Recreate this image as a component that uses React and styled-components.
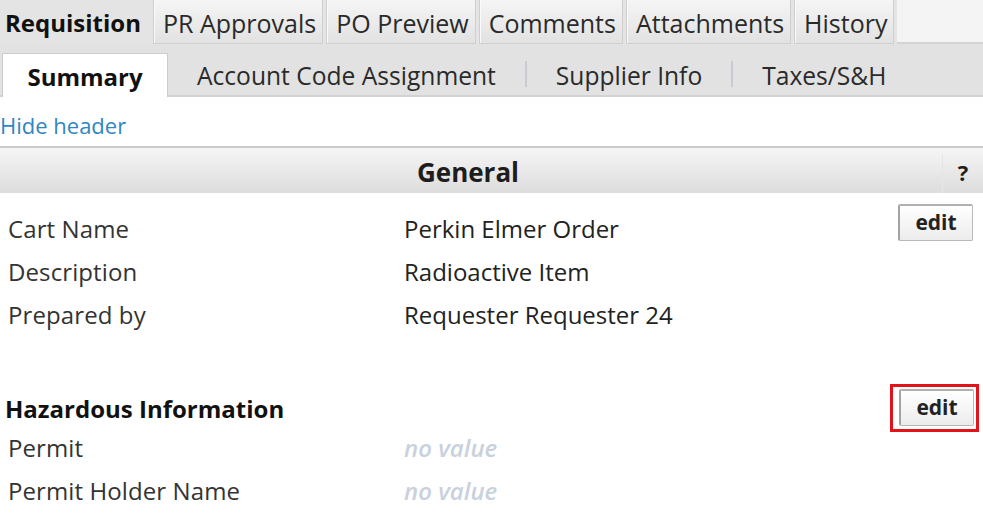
import React from "react";
import styled, { createGlobalStyle } from "styled-components";

const GlobalStyle = createGlobalStyle`
  html, body {
    margin: 0;
    padding: 0;
    background: #ffffff;
  }
  body {
    font-family: "Open Sans", "Noto Sans", "DejaVu Sans", sans-serif;
    color: #222;
  }
`;

const topTabs = ["PR Approvals", "PO Preview", "Comments", "Attachments", "History"];
const subTabs = ["Account Code Assignment", "Supplier Info", "Taxes/S&H"];

const generalRows = [
  { label: "Cart Name", value: "Perkin Elmer Order" },
  { label: "Description", value: "Radioactive Item" },
  { label: "Prepared by", value: "Requester Requester 24" },
];

const hazardRows = [
  { label: "Permit", value: "no value", empty: true },
  { label: "Permit Holder Name", value: "no value", empty: true },
];

const App = () => {
  return (
    <>
      <GlobalStyle />
      <Page>
        <TopTabBar>
          <TabGroup>
            <ActiveTopTab>Requisition</ActiveTopTab>
            {topTabs.map((t) => (
              <TopTab key={t}>{t}</TopTab>
            ))}
          </TabGroup>
          <TabFiller />
        </TopTabBar>

        <SubTabBar>
          <ActiveSubTab>Summary</ActiveSubTab>
          {subTabs.map((t, i) => (
            <React.Fragment key={t}>
              {i > 0 && <SubSeparator />}
              <SubTab>{t}</SubTab>
            </React.Fragment>
          ))}
        </SubTabBar>

        <HideLink href="#">Hide header</HideLink>

        <SectionHeader>
          <SectionTitle>General</SectionTitle>
          <HelpCell>?</HelpCell>
        </SectionHeader>

        <FieldBlock>
          <FieldList>
            {generalRows.map((r) => (
              <FieldRow key={r.label}>
                <FieldLabel>{r.label}</FieldLabel>
                <FieldValue>{r.value}</FieldValue>
              </FieldRow>
            ))}
          </FieldList>
          <EditButton>edit</EditButton>
        </FieldBlock>

        <SubsectionHead>
          <SubsectionTitle>Hazardous Information</SubsectionTitle>
          <Highlight>
            <EditButton>edit</EditButton>
          </Highlight>
        </SubsectionHead>

        <FieldList>
          {hazardRows.map((r) => (
            <FieldRow key={r.label}>
              <FieldLabel>{r.label}</FieldLabel>
              <FieldValue $empty={r.empty}>{r.value}</FieldValue>
            </FieldRow>
          ))}
        </FieldList>
      </Page>
    </>
  );
};

const Page = styled.div`
  width: 983px;
  height: 521px;
  overflow: hidden;
  background: #fff;
`;

const TopTabBar = styled.div`
  display: flex;
  height: 44px;
`;

const TabGroup = styled.div`
  display: flex;
  align-items: stretch;
  background: #e4e4e4;
  padding-right: 3px;
`;

const ActiveTopTab = styled.div`
  display: flex;
  align-items: center;
  padding: 1px 9px 0 5px;
  font-size: 24px;
  font-weight: 700;
  color: #111;
`;

const TopTab = styled.div`
  display: flex;
  align-items: center;
  margin: 0 0 0 3px;
  padding: 3px 6px 0 9px;
  border: 1px solid #cfcfcf;
  border-top: none;
  box-shadow: inset 1px 0 0 #fafafa;
  background: linear-gradient(#f5f5f5, #e2e2e2);
  font-size: 25px;
  color: #2a2a2a;
`;

const TabFiller = styled.div`
  flex: 1;
  background: #f4f4f4;
  border-bottom: 2px solid #d4d4d4;
`;

const SubTabBar = styled.div`
  display: flex;
  align-items: flex-end;
  height: 51px;
  background: #e2e2e2;
  border-bottom: 2px solid #d2d2d2;
`;

const ActiveSubTab = styled.div`
  display: flex;
  align-items: center;
  justify-content: center;
  width: 166px;
  height: 44px;
  margin: 0 0 -2px 2px;
  padding-top: 1px;
  box-sizing: border-box;
  background: #fff;
  border: 1px solid #cccccc;
  border-bottom: none;
  font-size: 24px;
  font-weight: 700;
  color: #111;
`;

const SubTab = styled.div`
  display: flex;
  align-items: center;
  height: 44px;
  box-sizing: border-box;
  padding: 5px 29px 0;
  font-size: 24.6px;
  color: #2a2a2a;
`;

const SubSeparator = styled.span`
  width: 2px;
  height: 26px;
  margin-bottom: 8px;
  background: #c8ccd2;
`;

const HideLink = styled.a`
  display: block;
  padding: 13px 0 6px 0;
  font-size: 22px;
  line-height: 30px;
  color: #2f86c4;
  text-decoration: none;
`;

const SectionHeader = styled.div`
  display: flex;
  height: 45px;
  border-top: 2px solid #cacaca;
  background: linear-gradient(#f5f5f5, #dddddd);
`;

const SectionTitle = styled.div`
  flex: 1;
  display: flex;
  align-items: center;
  justify-content: center;
  padding: 3px 6px 0 0;
  font-size: 26px;
  font-weight: 700;
  color: #1d1d1d;
`;

const HelpCell = styled.div`
  width: 40px;
  margin: 6px 0 0;
  display: flex;
  align-items: center;
  justify-content: center;
  border-left: 1px solid #e6e6e6;
  font-size: 22px;
  font-weight: 700;
  color: #1d1d1d;
  padding-bottom: 4px;
`;

const FieldBlock = styled.div`
  display: flex;
  justify-content: space-between;
  align-items: flex-start;
  padding-right: 10px;

  & > ${() => FieldList} {
    padding-top: 14px;
  }
`;

const FieldList = styled.div`
  display: flex;
  flex-direction: column;
  padding-left: 8px;
`;

const FieldRow = styled.div`
  display: grid;
  grid-template-columns: 396px auto;
  height: 43px;
  align-items: center;
`;

const FieldLabel = styled.div`
  font-size: 24px;
  color: #333;
  letter-spacing: 0.1px;
`;

const FieldValue = styled.div`
  font-size: 24px;
  color: ${(p) => (p.$empty ? "#c9d1de" : "#222")};
  font-style: ${(p) => (p.$empty ? "italic" : "normal")};
  font-weight: ${(p) => (p.$empty ? 600 : 400)};
`;

const EditButton = styled.button`
  width: 75px;
  height: 37px;
  margin-top: 11px;
  padding: 0 0 3px;
  border: 1px solid #b8b8b8;
  border-left: 2px solid #a3a3a3;
  border-top: 2px solid #b0b0b0;
  border-radius: 2px;
  background: linear-gradient(#ffffff, #ececec);
  font-family: inherit;
  font-size: 21px;
  font-weight: 700;
  color: #222;
  cursor: pointer;
`;

const SubsectionHead = styled.div`
  display: flex;
  justify-content: space-between;
  align-items: center;
  margin-top: 54px;
  padding: 0 4px 0 5px;
  height: 36px;
`;

const SubsectionTitle = styled.div`
  font-size: 24px;
  font-weight: 700;
  color: #111;
`;

const Highlight = styled.div`
  display: flex;
  margin: -6px 0;
  padding: 2px 2px 3px 6px;
  border: 3px solid #e3131c;

  & > button {
    margin-top: 0;
  }
`;

export default App;
